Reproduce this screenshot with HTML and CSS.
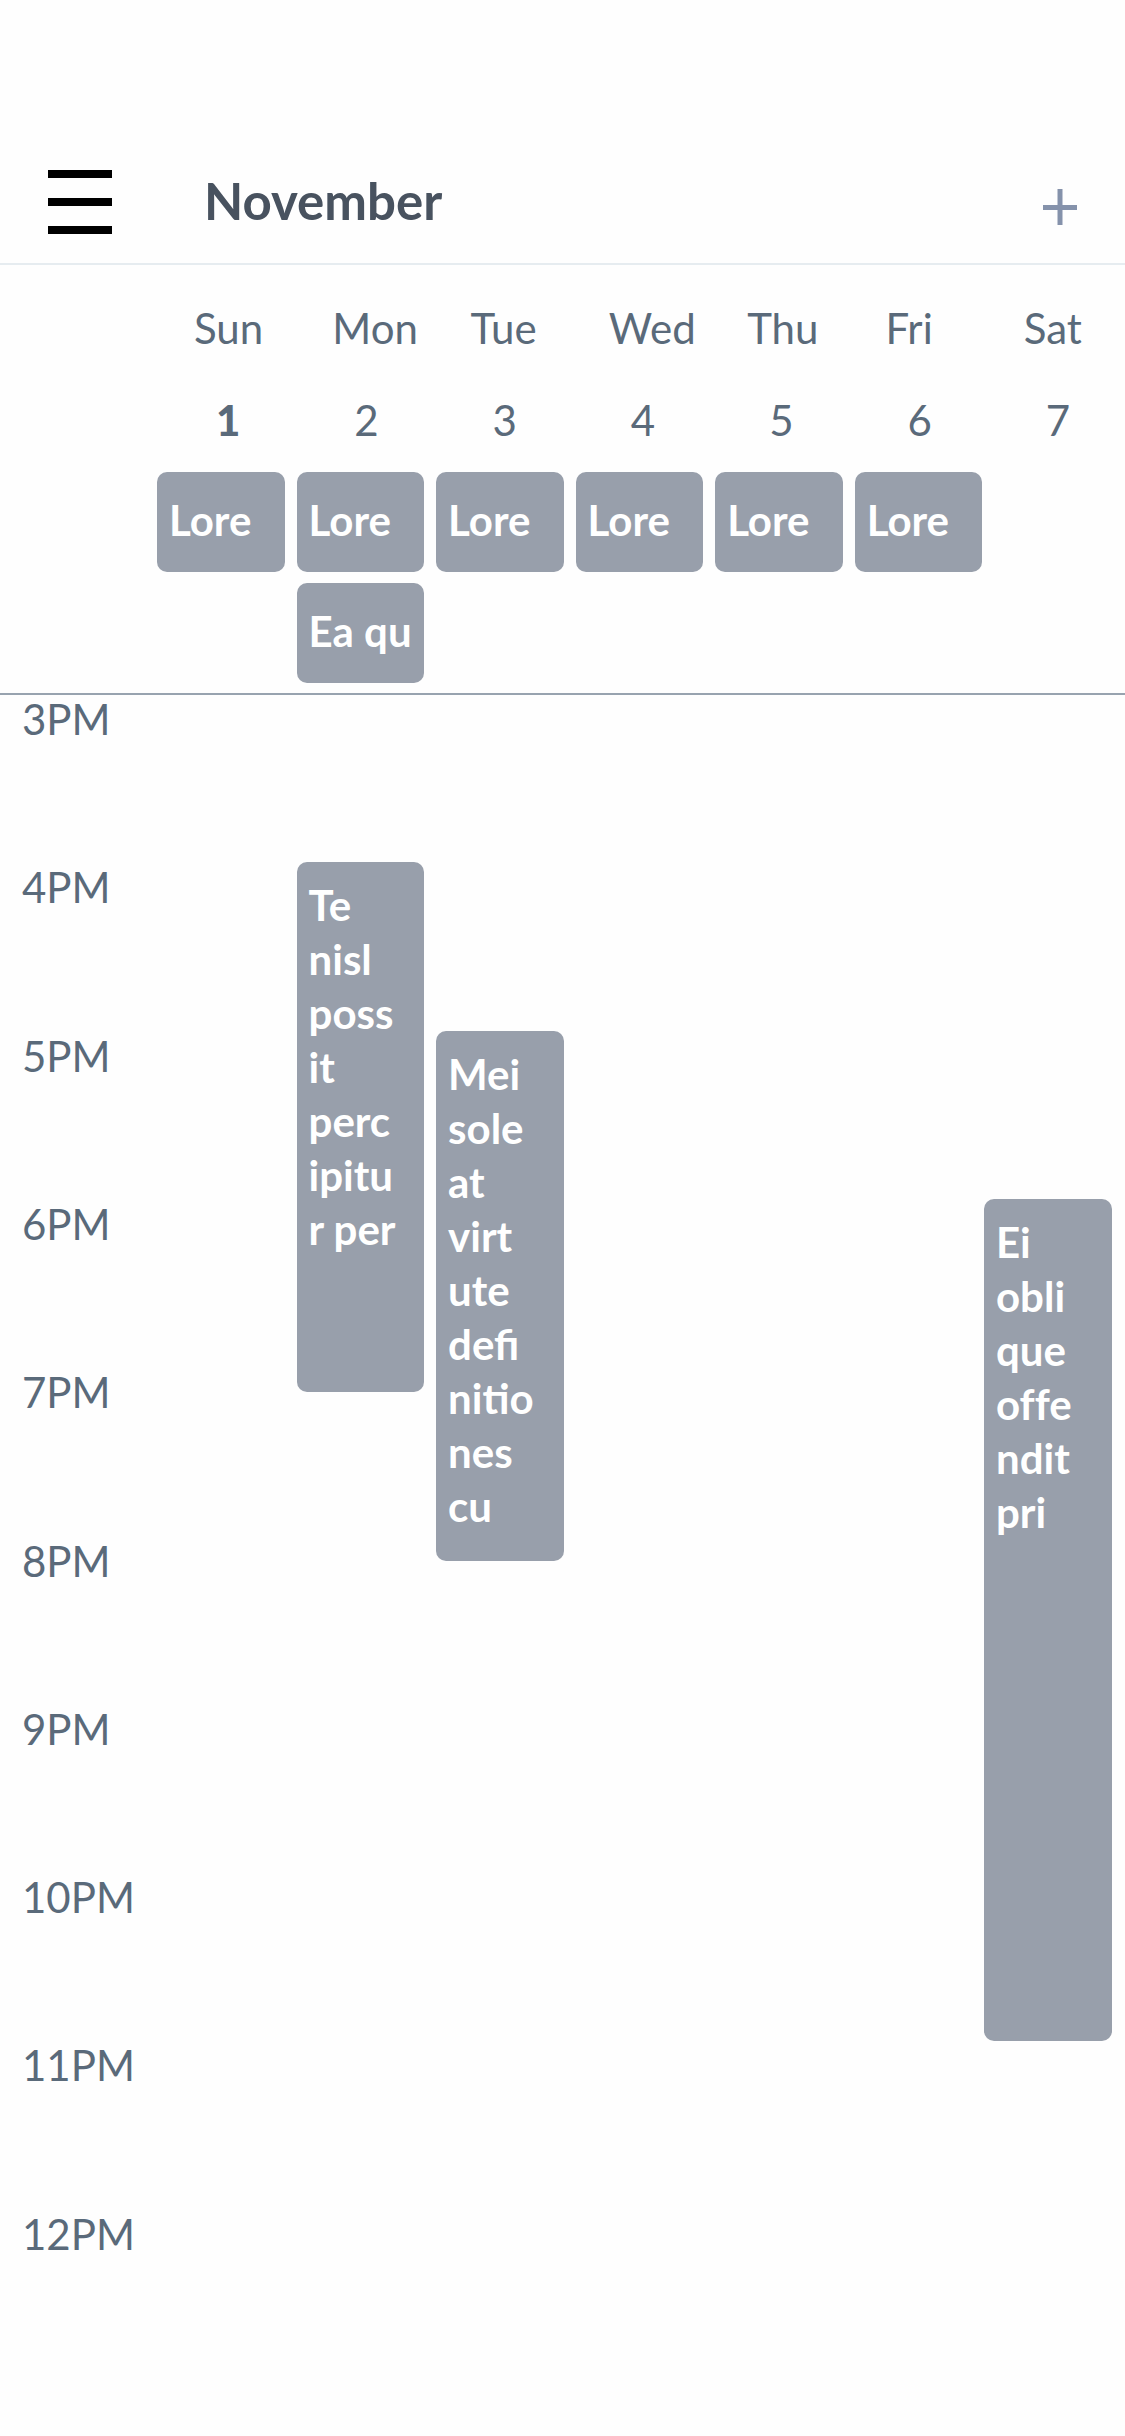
FILE: index.html
```html
<!DOCTYPE html>
<html lang="en">
<head>
<meta charset="utf-8">
<meta name="viewport" content="width=device-width, initial-scale=1">
<title>November</title>
<link rel="stylesheet" href="styles.css">
</head>
<body>
<div class="app">
  <header class="topbar">
    <button class="icon-button" type="button" aria-label="Menu">
      <svg width="64" height="64" viewBox="0 0 64 64" aria-hidden="true"><path fill="#000" d="M0 0h64v8H0zM0 28h64v8H0zM0 56h64v8H0z"/></svg>
    </button>
    <h1 class="title">November</h1>
    <button class="icon-button add-button" type="button" aria-label="Add event">
      <svg width="36" height="36" viewBox="0 0 36 36" aria-hidden="true"><path fill="#8592ab" d="M15.500 0h5v16h14.500v5H20.500v15h-5V21H1v-5h14.500z"/></svg>
    </button>
  </header>

  <section class="week">
    <ol class="days">
      <li class="day"><span>Sun</span><strong class="date date-today">1</strong></li>
      <li class="day"><span>Mon</span><span class="date">2</span></li>
      <li class="day"><span>Tue</span><span class="date">3</span></li>
      <li class="day"><span>Wed</span><span class="date">4</span></li>
      <li class="day"><span>Thu</span><span class="date">5</span></li>
      <li class="day"><span>Fri</span><span class="date">6</span></li>
      <li class="day"><span>Sat</span><span class="date">7</span></li>
    </ol>
    <div class="all-day">
      <div class="event chip sun">Lore</div>
      <div class="event chip mon">Lore</div>
      <div class="event chip tue">Lore</div>
      <div class="event chip wed">Lore</div>
      <div class="event chip thu">Lore</div>
      <div class="event chip fri">Lore</div>
      <div class="event chip mon">Ea qu</div>
    </div>
  </section>

  <main class="timeline">
    <div class="hour">3PM</div>
    <div class="hour">4PM</div>
    <div class="hour">5PM</div>
    <div class="hour">6PM</div>
    <div class="hour">7PM</div>
    <div class="hour">8PM</div>
    <div class="hour">9PM</div>
    <div class="hour">10PM</div>
    <div class="hour">11PM</div>
    <div class="hour">12PM</div>
    <div class="event block overrun mon from-4">Te<br>nisl<br>poss<br>it<br>perc<br>ipitu<br>r per</div>
    <div class="event block overrun tue from-5">Mei<br>sole<br>at<br>virt<br>ute<br>defi<br>nitio<br>nes<br>cu</div>
    <div class="event block plain-letters sat from-6">Ei<br>obli<br>que<br>offe<br>ndit<br>pri</div>
  </main>
</div>
</body>
</html>
```

FILE: styles.css
```css
* {
  box-sizing: border-box;
}

body {
  margin: 0;
  background: #fefefe;
  color: #5a6a7a;
  font-family: Lato, "Liberation Sans", sans-serif;
  font-size: 42px;
  line-height: 54px;
}

.app {
  display: flex;
  flex-direction: column;
  min-height: 100vh;
}

.topbar {
  display: flex;
  align-items: center;
  padding: 140px 47px 0 48px;
  height: 265px;
  border-bottom: 2px solid #e6ecf0;
}

.icon-button {
  display: flex;
  padding: 0;
  border: 0;
  background: none;
  cursor: pointer;
}

.add-button {
  padding-top: 10px;
}

.title {
  flex: 1;
  margin: 0 0 0 92px;
  padding-bottom: 1px;
  color: #48525f;
  font-size: 51px;
  line-height: 64px;
  font-weight: 700;
}

.week {
  padding: 36px 0 10px;
  border-bottom: 2px solid #98a3af;
}

.days {
  display: grid;
  grid-template-columns: repeat(7, 1fr);
  margin: 0;
  padding: 0 0 0 157px;
  list-style: none;
}

.day {
  display: flex;
  flex-direction: column;
  gap: 38px;
  padding-left: 37px;
}

.date {
  padding-left: 22px;
}

.date-today {
  font-weight: 900;
}

.all-day,
.timeline {
  display: grid;
  grid-template-columns: 157px repeat(6, minmax(0, 16fr)) minmax(0, 15fr);
}

.all-day {
  row-gap: 11px;
  padding-top: 25px;
}

.timeline {
  flex: 1;
  grid-template-rows: repeat(10, minmax(0, 1fr));
  min-height: 1600px;
  padding-bottom: 58px;
}

.hour {
  grid-column: 1;
  padding-left: 22px;
  line-height: 48px;
}

.event {
  margin-right: 12px;
  border-radius: 10px;
  background: #989fab;
  color: #fff;
  font-weight: 700;
  white-space: nowrap;
}

.chip {
  padding: 21px 12px 25px;
}

.block {
  margin-top: -1px;
  padding: 16px 12px;
}

.overrun {
  margin-bottom: -24px;
}

.plain-letters {
  font-variant-ligatures: none;
}

.sun { grid-column: 2; }
.mon { grid-column: 3; }
.tue { grid-column: 4; }
.wed { grid-column: 5; }
.thu { grid-column: 6; }
.fri { grid-column: 7; }

.sat {
  grid-column: 8;
  justify-self: end;
  width: 128px;
  margin-right: 13px;
}

.from-4 { grid-row: 2 / span 3; }
.from-5 { grid-row: 3 / span 3; }
.from-6 { grid-row: 4 / span 5; }
```
